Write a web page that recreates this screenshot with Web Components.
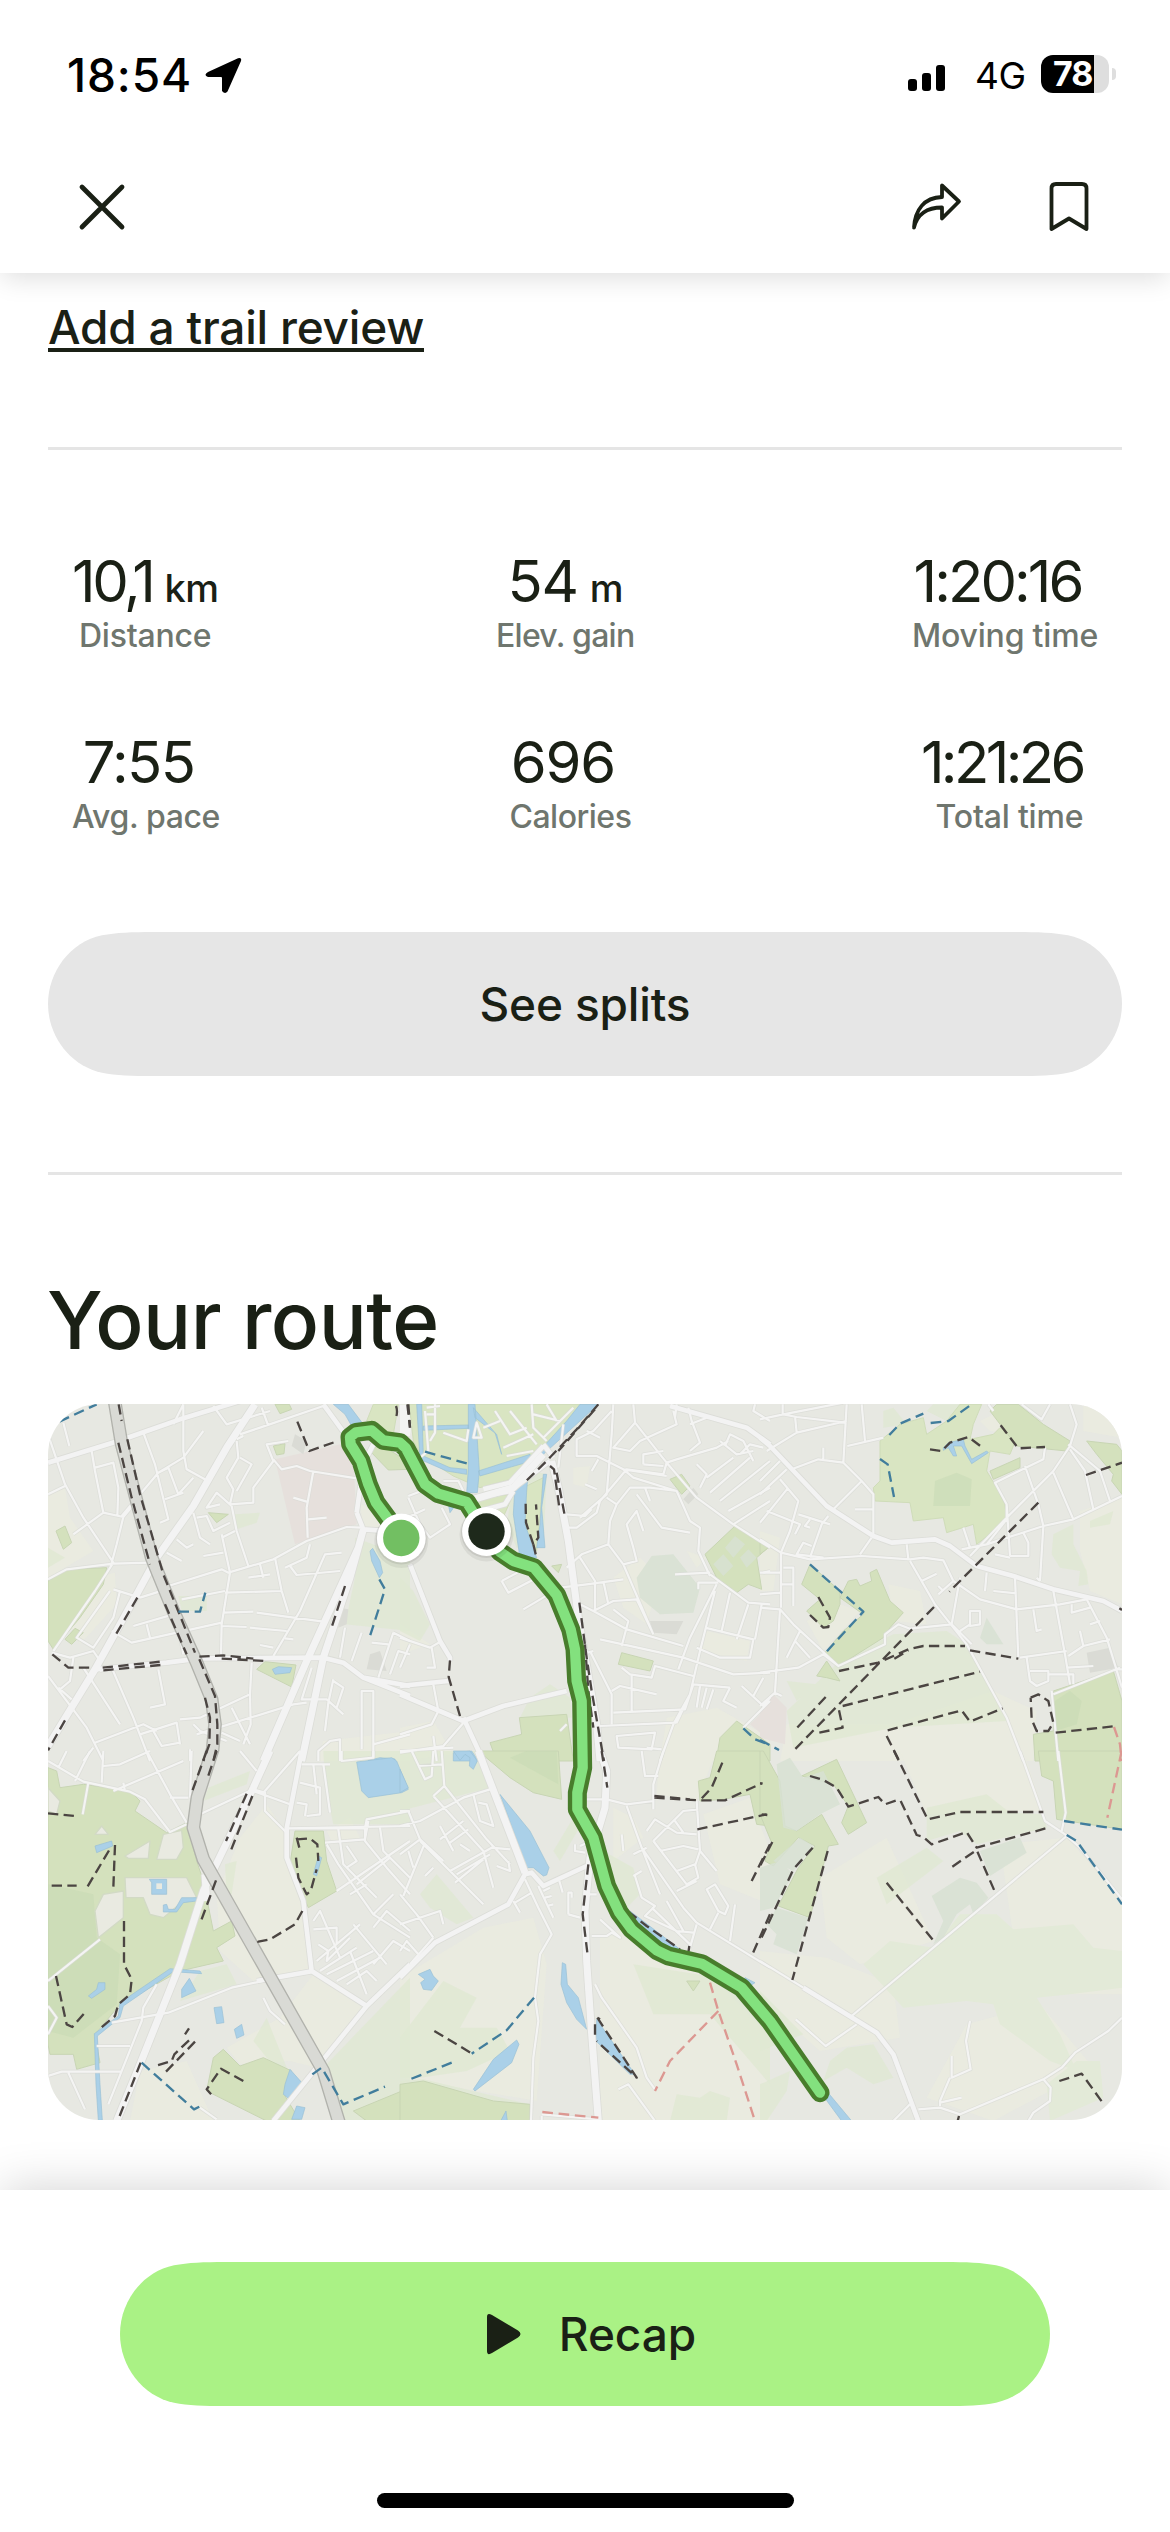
<!DOCTYPE html>
<html lang="en">
<head>
<meta charset="utf-8">
<title>Activity</title>
<style>
  html, body { margin: 0; padding: 0; background: #fff; }
  body { width: 1170px; height: 2532px; overflow: hidden; font-family: Inter, "Liberation Sans", sans-serif; color: #1a2015; }
</style>
</head>
<body>
<activity-screen></activity-screen>
<script>
const define = (name, html, setup) => customElements.define(name, class extends HTMLElement {
  constructor() {
    super();
    this.attachShadow({ mode: 'open' }).innerHTML = html;
  }
  connectedCallback() { if (setup) setup(this, this.shadowRoot); }
});

define('status-bar', `
<style>
  :host { display: flex; height: 147px; box-sizing: border-box; padding: 0 54px 0 67px; align-items: flex-start; color: #000; }
  .time { font-size: 46px; font-weight: 550; line-height: 54px; margin-top: 48px; width: 125px; letter-spacing: .9px; white-space: nowrap; }
  .arrow { margin: 57px 0 0 13px; }
  .right { margin-left: auto; display: flex; align-items: flex-start; }
  .bars { display: flex; align-items: flex-end; gap: 5px; margin-top: 65px; height: 26px; }
  .bars i { width: 9px; border-radius: 3px; background: #000; }
  .net { font-size: 37px; line-height: 44px; margin: 54px 0 0 30px; width: 66px; letter-spacing: -.5px; }
  .bat { margin-top: 55px; width: 68px; height: 38px; border-radius: 12px; background: linear-gradient(90deg, #000 53px, #dedede 53px); color: #fff; font-weight: 700; font-size: 34px; line-height: 38px; text-indent: 12px; letter-spacing: -1px; }
  .nub { width: 4px; height: 12px; border-radius: 0 5px 5px 0; background: #dedede; margin: 68px 0 0 3px; }
</style>
<div class="time">18:54</div>
<svg class="arrow" width="37" height="37" viewBox="0 0 37 37"><path d="M3 15 L33 1.3 Q37 0 36 4 L22.500 34.500 Q20 37.500 17 34 V21 Q17 20 16 20 H3 Q-2 18 3 15Z"/></svg>
<div class="right">
  <div class="bars"><i style="height:12px"></i><i style="height:18px"></i><i style="height:26px"></i></div>
  <div class="net">4G</div><div class="bat">78</div><div class="nub"></div>
</div>`);

define('nav-bar', `
<style>
  :host { display: flex; height: 126px; box-sizing: border-box; align-items: flex-start; padding: 32px 78px 0 76px; }
  svg { fill: none; stroke: #1a2015; stroke-width: 3.800; stroke-linecap: round; stroke-linejoin: round; display: block; }
  .gap { flex: 1; } .share { margin-right: 85px; }
</style>
<svg width="52" height="56" viewBox="0 0 52 56"><path style="stroke-width:4.800" d="M6 8 46 48M46 8 6 48"/></svg>
<div class="gap"></div>
<svg class="share" width="54" height="56" viewBox="0 0 54 56"><path d="M33 6.500V18C15 18.500 6 31 5 48.500C8 35.500 18 28.500 33 28.500V39.500L50 22.500Z"/></svg>
<svg width="44" height="56" viewBox="0 0 44 56"><path d="M3.500 50V9.500Q3.500 5 8 5H34Q38.500 5 38.500 9.500V50L21 39.500Z"/></svg>`);

define('page-header', `
<style>:host { display: block; height: 273px; background: #fff; position: relative; z-index: 2; box-shadow: 0 6px 26px -2px rgba(0,0,0,.14); }</style>
<status-bar></status-bar><nav-bar></nav-bar>`);

define('stat-item', `
<style>
  :host { display: flex; flex-direction: column; align-items: center; }
  .v { font-size: 58px; line-height: 70px; height: 70px; letter-spacing: var(--track, -1.200px); white-space: nowrap; margin-top: -3px; }
  .u { font-size: 38px; font-weight: 500; letter-spacing: -.5px; margin-left: var(--gap, 15px); }
  .l { font-size: 32px; line-height: 40px; color: #6f766e; font-weight: 500; letter-spacing: var(--lt, -.2px); white-space: nowrap; }
</style>
<div class="v"><slot></slot><span class="u"></span></div><div class="l"></div>`,
(el, r) => { r.querySelector('.u').textContent = el.getAttribute('unit') || ''; r.querySelector('.l').textContent = el.getAttribute('label'); });

define('stat-row', `<style>:host { display: flex; justify-content: space-between; height: 181px; padding: 0 24px; }</style><slot></slot>`);

/* Capsule with continuous corners: the curve eases into the straight edge over 105px. */
define('pill-button', `
<style>
  :host { display: flex; align-items: center; justify-content: center; height: 144px; background: var(--bg, #e6e6e6); font-size: 46px; font-weight: 550; letter-spacing: var(--bt, -.15px); }
</style><slot></slot>`,
el => {
  const w = +el.getAttribute('width');
  el.style.width = w + 'px';
  el.style.clipPath = `path("M0,72 C0,40 22,10 54,3.300 C68,.6 84,0 105,0 H${w - 105} C${w - 84},0 ${w - 68},.6 ${w - 54},3.300 C${w - 22},10 ${w},40 ${w},72 C${w},104 ${w - 22},134 ${w - 54},140.700 C${w - 68},143.400 ${w - 84},144 ${w - 105},144 H105 C84,144 68,143.400 54,140.700 C22,134 0,104 0,72Z")`;
});

define('rule-line', `<style>:host { display: block; height: 3px; background: #e5e5e5; }</style>`);

/* Street map. Each tile uses its own 1080-unit grid, three units to a pixel. */
const TILES = [
{ x: 0, y: 0,
  pale: 'M24,300 75,290 90,380 160,480 24,560ZM160,560 225,545 230,640 120,760 90,700ZM850,1050 1110,1020V1110H830ZM960,340 1030,360 1040,420 970,410Z',
  park: 'M945,440 1110,500V720L915,700 945,560ZM24,470 75,500 24,530ZM585,370 660,365 650,395 590,415ZM415,615H500V660H425Z',
  green: 'M24,570 80,535 200,530 190,580 120,680 40,775 24,750ZM705,40H748L755,55 720,68ZM700,165 735,158 732,188 710,192ZM505,365 565,370 530,395ZM650,835 675,812 768,822 755,888ZM75,745 105,712 130,725 95,760ZM990,180 1020,160 1085,200 1110,235 1045,237ZM48,420 75,405 95,455 70,475Z',
  lime: 'M1000,40H1075L1060,130 980,90Z',
  pink: 'M705,205 900,160 940,200 950,400 765,460Z', grey: 'M765,130 800,150 790,190 755,165ZM900,650 925,655 920,700 895,710ZM990,790 1020,780 1040,840 980,835Z',
  water: 'M880,40H925L970,100 935,105 915,70ZM990,480 998,472 1020,510 1028,545 1018,560 995,510ZM697,835 715,827 755,830 750,845 705,850ZM985,1108 1020,1100 1065,1104V1110Z',
  minor: 'M24,130 75,280 130,380 220,515 165,600 40,780M24,310 75,285M70,95 88,165M155,180 165,240 190,365 250,378 230,460 215,515M165,230 220,215 235,290 232,375M190,365 100,430M24,565 80,535 220,518 330,515M245,375 355,245 430,200 490,120M250,378 290,330M310,125 345,220 385,385 360,395M430,40V180L440,235 500,268M355,245 385,230 415,310 460,260M375,325 430,305M430,40 400,100M520,45 560,100 690,60M600,130 660,110 850,45M610,135 590,145M590,150 595,200 560,260 580,295 570,340 640,335 640,290 700,210 680,160 745,150M600,200 635,220 590,300M665,50 685,105M700,205 725,235 770,225 810,240 950,262M820,240 800,350 803,440M760,320 800,332M805,385 860,380M575,345 590,420 625,525M575,345 530,305 500,350 540,340M385,585 545,535 565,545 700,505 800,450 920,408 965,410M545,430 570,545 545,700 543,790M555,605 725,600 745,665M550,665 640,662M650,665 850,692M545,705 620,708M630,710 740,720M705,500 725,600M750,525 770,552 900,540M735,530 800,500 810,460M905,485 855,490 780,660 700,795M460,365 480,440 510,460M470,380 500,375 520,420 570,395M380,485 425,510M410,445 440,470 460,460M490,495 550,485M545,440 585,420M395,590 300,620M220,595 300,620M210,600 110,740 160,770 220,680 240,600M35,785 90,800 160,780 180,810M215,720 275,755 545,695M280,705 400,670M320,700 330,740M425,625 555,600M405,660 430,790M24,855 140,1010 190,1110M95,925 55,890M180,840 215,830 280,980 330,1110M60,895 90,870 100,800M130,830 240,1000M165,1055 310,1000 350,1020M355,835 375,940 330,950M300,1030 410,995 420,1060M340,1020 365,1065 420,1055M420,985 480,980 630,910M635,815 630,910 632,1000 610,1060M575,950 630,1060M470,1030 760,940 800,935M545,1025 600,1050M460,1000 480,1020 560,1050M660,762 700,770M735,742 760,745M915,710 900,800M965,725 935,810M995,755 1045,760M1060,725 1015,860M1060,725 1110,750M1050,850 1075,780 1110,790M815,830 785,925 860,925 910,970M880,865 865,935 855,1020M880,870 910,890 890,950M965,1075V900H1000V1100M835,1110V1080L870,1050 900,1045V1110M1000,1060 1110,1030M625,560 690,550M660,520 670,560M130,1110 160,1070M450,1075V1110',
  major: 'M24,215 235,150 420,85 600,30M380,815 480,802 850,800 910,815 970,860 1110,915M970,860 1110,885M165,835 380,815M850,40 930,150M950,365 970,415 1040,420M965,260 950,365M980,200 1000,160',
  big: 'M645,40 560,170 460,345 350,500 290,610 165,835 24,1065M970,415 955,470 800,810 670,1110M955,470 930,560 850,800 785,1110',
  black: 'M236,40 245,90M262,145 300,310 370,550 465,785M235,155 275,320 330,520M375,640 440,790M478,805 525,915 532,1000V1060L520,1110M495,920 510,980 508,1060 490,1110M772,92 808,180 885,153M292,620 225,735M37,790 85,830H155M188,830 362,812M190,838 362,822M478,797 550,793 640,803M545,803 680,810M915,585 873,715M75,988 24,1078M1068,45Q1074,60 1068,80M1105,40 1110,110',
  blue: 'M58,92 170,40M415,662H480L496,605M1018,565 1035,595 990,735' },
{ x: 1080, y: 0,
  pale: 'M520,230 570,225 560,290 520,280ZM920,720 1050,750 1040,810 900,780ZM800,980 950,950 1110,1040V1110H780ZM640,560 720,500 780,560 740,700 670,650ZM0,700 90,760 0,790ZM0,1010 100,990 160,1090 0,1110ZM860,480 920,500 890,530Z',
  park: 'M0,560 40,600 90,700 60,750 0,720ZM390,920 450,880 510,920 515,980 360,980ZM340,280 400,240 440,250 430,470 350,470 320,400Z',
  lime: 'M0,40H590L520,90 350,260 240,290 160,255 65,195 40,150 30,60ZM350,300 430,260 410,480 370,400ZM205,320 340,310 300,400 230,350Z',
  road: 'M0,40H22L34,100 30,135H0Z',
  green: 'M810,265 845,250 870,285 845,310ZM915,490 1005,405 1110,465 1070,500 1085,595 1045,580 1010,605 950,560ZM665,785 760,810 750,840 655,820ZM270,1055 365,1030 358,980 500,970 520,1110H290ZM950,1100 960,1040 1010,990 1110,1060V1110ZM455,525 485,520 475,545Z',
  park2: 'M710,560 755,495 820,490 900,590 880,665 780,670 720,620ZM975,470 1005,435 1035,460 1000,500ZM940,520 970,490 1000,525 970,555ZM1020,500 1045,475 1070,500 1040,530Z',
  pink: 'M1050,1000 1110,940V1050Z', grey: 'M850,325 880,290 895,310 865,340ZM750,690 850,690 830,730 760,725Z',
  water: 'M205,40H225L238,240 232,305H200L205,235ZM50,40H65L70,195 150,230 200,235V250L140,240 60,205ZM70,105 205,102V112L70,118ZM220,50 285,125 305,190 290,130 225,80ZM235,240 390,190 395,210 240,255ZM540,40H595L430,190 385,240 380,300 375,400 410,500 360,500 340,370 345,280 400,200 500,90ZM440,250 425,350 435,470 410,470 420,400 430,250ZM145,340 165,345 150,365ZM160,1085 215,1080 235,1110H160Z',
  minor: 'M75,60 85,180 60,200M105,40V125L90,150M80,50 120,45M130,125 200,150 205,115M80,70H105M230,95 220,140 245,140ZM250,110 300,90M285,60 330,130 380,110M330,60 410,160M395,40 400,110 440,150M400,70 480,90M440,40 470,90M310,170 400,130M320,195 400,180M520,50 430,140M130,270 175,270 190,300M25,315 90,290M25,320 60,400 90,440 150,400 125,350M20,380 75,355M475,230 490,100M640,40 635,130 620,310 540,380M635,60 580,120 530,145V195H590L670,235 800,255M575,240 595,205M700,40 705,95 780,190 800,215 890,320 1000,400 1110,470M705,95 640,170 690,180 720,150 830,100 820,60M560,120 600,140M800,215 790,250 680,235 600,330 590,365 530,410 500,410M670,235 700,260 830,300 870,390 900,410 895,480 930,555M830,300 750,290 690,290 650,340 630,390 625,460 670,520 760,730M620,320 650,340M625,460 545,490 500,530M670,520 710,510 700,470 680,400 710,360 730,420M710,310 785,410 870,425M735,290 750,330M500,370 555,375 575,355M730,220V190L790,180M730,220 790,225M555,280 590,295M865,50 875,90 900,155 870,180M870,100 920,80M830,40 825,80M1110,90 1060,60 1065,40M800,215 830,205 950,170 985,150M900,290 920,250 890,220M920,260 1000,200M930,305 1050,200M960,330 1110,210M985,360 1110,290M1000,400 1110,330M960,150 1010,190 1060,180M975,165 990,130 1030,150 1060,210M1020,190 1050,160 1090,170M1090,545 1110,540M825,550 930,545M895,595V575H955M930,550 1045,635 1110,640M950,580 870,740 835,835M945,600 900,780 870,910 820,1000 780,1110M990,605 965,720M1045,640 1010,745M915,710 1060,745 1050,800 960,800 890,770M1085,640 1065,745M600,745 850,800 1000,850 1110,845M540,640 580,660 680,715 850,765M585,655V570L540,500M580,660 640,630 710,625 760,730M610,570 625,640M480,590 560,580 670,565M665,765 685,690 640,655M305,570 380,530M305,570 325,605 440,545M370,655 480,590M570,780 635,910V1000M580,780 545,790M635,900 660,885 770,910M665,830 690,850 755,860 765,825 880,855M695,850V965M640,965 855,955 880,880M600,1005 830,995M650,1035 765,1025 755,1075 655,1070ZM785,1075 740,1070M880,880 990,890M900,885 890,950M920,890 905,950M940,895 920,955M990,890 970,930 1010,950M1025,885 1090,945 1110,920M1060,915 1090,860M870,910 830,995M1030,1010 1110,930M0,740 90,770 125,750M30,760 0,830M95,770 105,830 80,830M0,1030 95,1000 115,960 100,880M195,990 130,1065 0,1085M100,1035 110,1110M0,1080 160,1070M500,1000 480,1020',
  major: 'M30,520 120,750 150,800 150,810M0,885 145,870M0,910 190,990 310,945 500,900M190,980 250,1110M225,320 330,300 450,210M250,295 330,275 430,165M340,300 315,340 240,360M810,45 1040,110 1110,160M430,160 460,200',
  big: 'M455,210 475,290 505,450 535,680 590,1000 600,1110M430,190 340,290 220,325',
  black: 'M22,40 30,110M595,40 530,115 440,210 370,278M585,55 475,180M450,225 462,235 478,350M470,245 495,378M377,338 378,395 400,460 415,440 408,340M400,460 412,510M538,635 560,800 575,900 612,1110M555,760 565,900 580,1010M150,808 146,858 180,975',
  blue: 'M75,182 203,218M1030,1012 1065,1045 1110,1062' },
{ x: 2160, y: 0,
  pale: 'M240,640 300,660 190,780 140,690ZM385,580 480,600 500,700 400,690ZM960,360 1086,320V640L990,600 960,480ZM660,90 720,60 760,130 690,120ZM0,420 60,440 40,600 0,600ZM80,1000 400,1000 700,900 830,960 820,1110H60ZM970,40H1086V140L970,120Z',
  park: 'M500,60 520,40H640L560,90ZM370,60 400,50 440,100 370,110ZM80,960 250,800 400,730 560,720 620,760 740,990 400,1010 100,1070ZM880,430 940,400 940,460 980,540 985,580 955,585 960,540 900,530 875,490ZM990,390 1060,360 1050,400 990,410ZM80,870 170,880 110,930Z',
  lime: 'M360,150 420,100 490,80 500,130 560,90 600,40H665L640,100 630,145 700,130 720,110 770,140 750,190 690,180 680,240 710,290 735,340 740,390 650,460 640,400 560,425 550,380 460,390 450,335 345,330 340,290 360,270Z',
  green: 'M710,40H775L850,100 930,150 920,180 770,165 690,60ZM690,240 780,200 780,230 700,265ZM980,150 1070,160 1086,180V310L1055,270 1060,250 1010,190ZM125,580 150,520 240,600 240,640 220,690 190,710 140,660 180,625ZM240,620 265,570 290,565 300,585 335,570 330,545 350,535 390,630 430,665 390,710 370,740 235,825 190,790 250,720 310,670ZM170,855 200,810 240,870 200,860ZM0,455 25,470 0,490ZM880,900 1060,840 1086,930V1110H825L820,1030 880,1020Z',
  park2: 'M680,760 660,740 680,680 730,760Z',
  green2: 'M525,270 590,245 635,265 630,345H520ZM885,930 930,900 965,930 950,1000 885,1020Z',
  pink: 'M0,960 40,910 80,950 75,1060 0,1040Z', grey: 'M980,785 1050,770 1075,830 990,845Z',
  water: 'M550,170 565,155 610,145 615,165 635,205 680,180 685,185 635,218 605,165 580,165 590,195 580,195 565,170 550,178Z',
  minor: 'M0,85 70,70 250,35M70,70 110,78 255,95M105,75 110,125M68,40V70M260,40 250,215M305,40 315,150M262,165 370,140M110,125 260,90M20,180 110,125M95,235 175,205 250,215 305,270 340,310V435M305,270 220,355M190,205V170M0,270 60,210M0,310 80,235M60,265 115,330 90,420 63,485M0,395 85,290M20,360 120,400 105,430M115,370 210,400M285,355H340M205,375 185,400 150,500M150,385 135,405 150,410M190,500 110,490 130,455 155,465M335,440 300,490M0,445 63,485 150,505 305,495 450,505 490,500 550,508 580,570M63,485V650M0,545 60,545M60,580H100V530H70M0,610 60,605M100,580V645M0,650 60,655 100,700 235,825M60,655 45,905 0,945M45,905 65,915M120,720 80,800M105,750 150,800M0,845 115,830 190,790 235,825 375,760V730L415,700 450,713 575,700M440,460 445,505M450,510 525,640 620,760 740,980 790,1110M580,570 660,625 770,655 900,640 980,625M600,560 575,700 635,760M485,570 530,548M535,585 550,600M535,610 580,570M630,660V705L660,700V660ZM600,720 630,700M610,410 630,470M605,475 680,460 850,405 940,385 1086,315M680,460 740,385V340L705,275 850,205 855,170M740,340 750,495M705,490 750,500M750,495H805V455L790,425M630,495 740,380 880,240 930,165 950,100 930,40M795,225 835,340 850,405 840,570M880,245 940,385M930,175 975,240 1000,355M925,160 1020,240 1050,330M785,40 845,85 870,40M685,40 700,60M680,545 675,600M700,600 770,607M765,560 775,800M830,560 840,570M880,600 915,790 930,880M980,625 1040,740 1086,890M935,640V665L990,650M990,700 1020,690M820,655 830,720 845,715M960,720 970,765 925,795M780,800 920,780M970,765 1050,745M800,800 810,870 830,885 865,870V840L810,840M865,850 940,850V880M920,830 1000,825M1075,835 1086,835M880,910 1080,830M875,900 895,1110',
  major: 'M0,140 30,165 200,345 340,435 395,455 525,445 570,465 650,525 760,555 880,595 1030,630 1086,660',
  black: 'M722,103 775,172 855,168M510,175 545,180 570,155 625,138 668,170M978,252 1086,215M835,335 568,602M522,648 100,1080M175,618 210,680 205,708 190,710 150,672M237,840 355,815 445,775 490,765H615M403,803 445,778M630,778 775,803M248,945 660,842M197,918 107,1015M178,1025 248,1010 235,948M383,1018 605,958 630,992 728,952M380,1035 418,1110M812,920 835,910 865,930 880,995 865,1020 830,1020 815,985 812,920M887,1025 1060,1006M1078,652 1086,657',
  blue: 'M388,132 420,98 490,68M512,96 565,90 632,42M360,204 383,220 402,318M150,520 200,565 310,662 195,787M0,1047 57,1077',
  red: 'M1062,1008 1080,1060 1085,1110' },
{ x: 0, y: 1080,
  pale: 'M680,160 740,250 745,340 795,470 820,650 640,690 540,600 530,430 600,260ZM560,890 720,800 820,670 980,760 830,950 750,930 600,940ZM860,240 930,200 960,260 880,280ZM300,960 440,930 520,1110H270Z',
  park: 'M850,0H1110V220H880L855,100ZM480,660 560,640 590,700 420,750ZM850,950 1110,680V1110H900ZM640,870 680,800 760,1000 680,920ZM505,110 630,60 620,100 490,150ZM555,340 590,330 575,430 560,430Z',
  green: 'M24,50 50,60 60,110 130,100 270,120 300,150 285,180 380,245 440,215 470,330 490,390 520,540 575,510 585,555 530,590 550,630 420,660 240,760 165,850 180,935 110,955 100,910 30,910 24,880ZM765,240H850L860,330 890,420 805,470 750,340ZM520,920 550,895 600,945 670,920 755,960 735,1035 780,1110H680L500,1020ZM940,1080 1110,1010V1110H980Z',
  green2: 'M24,400 160,430 170,560 240,610 230,760 100,860 24,840Z',
  pale2: 'M255,315 330,270 325,322 265,322ZM370,250 425,238 430,290 410,325H350ZM255,380H440L470,440 430,450 370,500 330,490 310,440 258,440ZM190,430 250,420V500L175,560 165,480ZM185,225 205,250H165ZM24,110 60,150 50,190 24,180Z',
  water: 'M950,33 1055,20 1070,30 1105,115 1085,125 985,140 965,120ZM165,285 215,270 218,285 170,305ZM328,385H380V430H335V395ZM370,462 380,460 385,475 405,475 425,440H470V450L430,455 410,483H370ZM145,735 170,715 175,695 195,695V715L155,742ZM425,740V715L448,682 468,720ZM522,770 545,767 552,815 530,818ZM583,835 605,820 612,852 590,862ZM835,315 845,320 830,375 820,370ZM735,1000 750,955 790,1000 745,1042 730,1030ZM755,1105 770,1065 795,1070 785,1105ZM163,848 235,795 240,755 390,653 480,660 485,668 400,662 250,765 240,800 172,855 180,1000 187,1108H175L168,1000Z',
  hole: 'M349,397H366V414H349Z',
  minor: 'M24,30 130,92 270,122 315,145 390,243 440,220M145,95 128,190M185,95 190,0M105,90 150,0M55,50 80,0M190,45 240,40 330,0M220,120 430,30M320,0 390,130 440,215M455,0 450,140M390,140H445M250,95 255,120M480,190 640,115M640,115 675,125V180L740,245M640,120 750,160M780,0 670,125M600,0 650,60M740,232H975L980,205 1110,180M740,232 1110,225M785,40H870M820,40 830,130M850,40 870,185M780,95 840,110V190L800,195M770,155 800,160 795,195M905,0V30L1000,20V0M855,275 975,265 985,210M860,280 895,340 1000,490 1110,560M895,235 910,340 1010,440M975,230V270L1040,350 1110,430M1020,230 1030,300 1110,380M890,420 1110,270M950,400 1050,320M920,285 950,330 920,350M1000,490 1060,430M930,430 980,400M820,510 840,480 900,620M820,535 890,530V580M835,580 865,600 860,630 930,560M830,630 960,520M840,660 950,590M860,670 1000,600M890,690 1020,620M920,700 980,660 1010,690M940,520 1040,640M1000,530 1040,480 1110,540M1000,640 1060,570 1110,600M930,600 980,730M24,690 180,565M24,850 50,800 24,765M24,975 65,962H245M85,965 135,1075M170,885H270M215,815 385,785 575,710 810,660M350,700 310,770 305,810 205,1060M480,1070 530,1105M670,740 690,780 735,820',
  major: 'M690,0 640,115M785,0 740,232 740,320 790,450 815,660 980,765 1110,640M980,765 700,1110M650,690 820,660',
  big: 'M690,0 640,110 490,420 420,640 300,940 230,1110M495,370 500,450',
  black: 'M24,187 105,195M35,404H110M143,406 215,285M225,282 220,410M252,510V640L275,685 270,730 235,760 225,795 183,830M48,675 80,820 97,828 132,788M500,0 455,125M530,0 503,80M620,128 558,270M637,135 572,300M528,388 483,510M770,265 810,262 832,280 835,330M770,260 778,290M768,320 775,380 800,430 812,420 830,355M787,480 765,520 690,565 655,572V585M447,832 435,850M447,868 403,910 395,930 345,945M465,872 375,965M610,990 543,953 500,1015 515,1032M302,935 235,1105',
  blue: 'M305,935 462,1075 482,1065M817,970 845,950 910,1060 1035,1007' },
{ x: 1080, y: 1080,
  pale: 'M0,680 250,530 400,500 440,640 410,1050 0,980ZM600,560 700,520 760,600 960,700 1110,860V1110H600ZM910,190 1050,140 1110,300V460L960,400ZM640,170 700,200 730,260 640,330ZM780,0H950L890,150 770,130Z',
  park: 'M0,0H240L270,110 0,180ZM0,860 130,690 230,740 180,830 290,830 330,900 200,960 60,980 0,980ZM0,990 70,985 390,1060V1110H0ZM460,300 520,200 550,210 480,330ZM610,300 700,350 720,430 670,480ZM810,1110 830,1030 900,1040 930,1020 990,1040 980,1110ZM60,430 110,370 220,500 170,520 90,470ZM700,640 960,680 1110,850V1000L930,790H760Z',
  green: 'M235,0H475L485,145 400,125 330,80ZM930,80 950,0H1080L1110,40V225L1070,220 1050,130 970,145 900,150 895,90ZM0,1000 70,990 280,1050 390,1060V1110H0ZM860,690 880,720 900,690Z',
  green2: 'M330,20 380,0H470L475,100Z',
  water: 'M300,130 390,240 447,350 440,372 430,375 400,350 380,350ZM0,55 25,110 0,125ZM487,635 497,640 502,700 535,740 560,835 530,805 500,755 483,700ZM590,805 705,970 690,970 588,870ZM690,480 840,595 800,600 740,550ZM1035,680 1065,695 1050,705 1030,690ZM55,670 90,655 100,675 115,690 95,718 70,715 62,695 75,685ZM220,1015 280,925 350,867 357,880 335,935 225,1020ZM302,1110 318,1080 322,1110ZM160,0H210L232,30 220,55 208,45 210,20 195,10 180,28Z',
  minor: 'M35,0 75,85 95,75 100,0M55,45 125,40M125,0 133,105 260,265 330,340M100,135 133,105M100,135 250,300 280,410M0,225 60,210 190,140 270,115M0,180 25,180 60,265 130,330M60,265 0,310M60,270 150,360 250,460M75,275 10,435M25,300 40,350M0,430 50,490 100,560M0,520 120,480 130,520M0,600 20,570 55,610M120,225 160,300M150,275 205,235M150,360 275,290 330,295M165,395 250,325M170,370 270,310M120,265 190,210M180,280 210,300M220,130 240,210 280,225 260,160 235,155M290,345 330,360 325,330M75,375 100,350M100,560 30,640M340,450 360,485M375,385 415,470 455,550 420,610 405,740 415,810 400,920 393,1110M345,455 395,425M415,405 460,500M430,420 450,410M435,440 455,435M440,465 460,460M478,390 488,425M505,490V425H515V440M505,490 540,500M560,145H620L680,160 760,150M570,430H590M680,165 725,290 780,430M725,290 850,470 890,515 1110,650M760,175V100L790,0M725,0 735,75H775M740,240 765,205 830,245 890,250M760,270 850,180 895,175M760,270 860,400 895,380 885,340 830,360M890,150 900,300 885,345M900,300 950,360M780,300 850,285 895,295M825,210 850,245M700,310 740,290M665,250 670,300M705,375 725,440 765,465 735,495 830,540 880,545M700,375 725,360M800,450 850,540M830,420 890,390M920,415 945,400 985,465 975,490 955,480ZM955,485 930,535M1005,460 990,570M890,520 870,590M600,505 660,560 635,545 620,555H575M585,700 605,740 710,890 740,980 765,1015M655,1015 685,1000 765,1110M525,280V300L555,305M575,270 540,285M755,470 870,580M425,1095V1110M425,1090 595,1105',
  major: 'M0,680 105,575 325,460 375,370 395,365 430,405 560,345',
  big: 'M235,0 375,365M600,0 620,60 615,170 570,320 555,480 560,630 575,850 595,1110',
  black: 'M605,0 622,110M565,340 548,490 562,605M763,140 895,148H975L1085,97M763,135 870,145M967,35 935,110 900,148M892,235 1100,190M1110,280 1055,390M1110,490 1058,608M685,482 740,525 840,595M868,585 865,605M592,800 710,980 590,870M585,820V855M592,800 600,805M103,840 215,907',
  blue: 'M402,740 320,838 215,908M155,935 30,985',
  red: 'M930,695 955,780 1010,940 1065,1110M955,780 810,930 765,1020M427,1083 595,1100' },
{ x: 2160, y: 1080,
  pale: 'M420,0H790L850,180 500,190ZM180,380 380,260 520,570 300,640 200,560ZM0,600 200,620 400,700 420,860 180,900 0,740ZM720,280 920,260 1086,440V730L940,730 760,560ZM620,820 840,760 1000,950 700,1110 500,1040ZM910,0H1086V210H910Z',
  park: 'M500,170 680,130 750,185 850,190 860,230 650,280 600,240 500,270ZM350,380 500,290 550,330 380,460ZM210,930 260,890 340,880 400,980 340,1000 260,950 190,990ZM0,1000 90,960 80,1020 20,1110H0ZM0,720 130,850 0,900Z',
  mint: 'M390,570 520,590 600,490 710,490 760,535 940,520 1000,590 1086,600V710L930,730 830,740 900,850 950,960 870,930 720,820 700,760 620,750 430,770 310,640ZM860,1000 950,930H1020L1030,1040 870,1110Z',
  park2: 'M50,40 90,20 130,80 190,60 240,160 180,190 110,240 70,230ZM515,435 600,380 650,395 685,440 640,490 630,460 590,490 550,560 520,580 550,510ZM660,300 780,260 800,305 690,375ZM0,350 60,330 100,370 40,470 0,480ZM50,470 145,500 110,610 40,580 50,550 20,520ZM40,330 120,260 160,285 100,360Z',
  green: 'M0,0H10L60,90 75,225 110,240 185,190 235,280 205,285 150,500 55,465 115,350 165,285 115,260 40,345 15,330 35,275 0,190ZM125,75 230,25 320,215 265,250 245,215 265,165 220,100ZM835,0H1086V235L890,205 880,90 845,75Z',
  water: 'M200,1020 275,1110H245L190,1035Z',
  minor: 'M780,0 855,210 915,250M895,0 917,185 905,240M920,255 275,795M915,250 960,290 1086,445M107,805 197,885 290,820M630,810 618,870 632,955 575,980V915M570,980 540,1050V1065M540,1055 605,1040M475,1075 540,1070 600,1090 850,985 905,950 945,905 1045,840 1086,800M850,985 872,1010 870,1050 820,1085 805,1110M450,1060 400,1110M0,630 130,710',
  major: 'M130,710 350,845 400,910 475,1110',
  black: 'M402,0 503,205 600,183H850M150,75 190,87 230,110 265,167 355,138 375,160 410,148M422,150 470,252 490,258 515,280 620,243 650,290 865,230M577,347 650,297 708,430M380,395 527,577M203,300 97,687M158,290 100,355 45,475 0,570M37,273 0,345M0,97H8M5,190 22,192M898,990 965,968 1028,1055M597,1095 593,1110',
  blue: 'M912,210 1086,236M920,252 950,270 1086,460', red: 'M1085,0 1042,200' },
];
const LAYERS = [
  ['pale', 'fill="#eaebdf" opacity=".85"'], ['park', 'fill="#dfe8d2" opacity=".75"'], ['mint', 'fill="#e3ead8"'],
  ['pink', 'fill="#e6e0dc"'], ['grey', 'fill="#dadbd5"'],
  ['lime', 'fill="#d9e5c2" stroke="#cfdcb9" stroke-width="3"'], ['road', 'fill="#f3f3f3"'],
  ['green', 'fill="#d4e1bd" stroke="#c8d5b4" stroke-width="3"'], ['green2', 'fill="#c6d9b3" opacity=".5"'],
  ['park2', 'fill="#d7e1d2" opacity=".85"'], ['pale2', 'fill="#e9eae1" stroke="#d2dac5" stroke-width="4"'],
  ['water', 'fill="#aad0e8" stroke="#99bfd5" stroke-width="2"'], ['hole', 'fill="#e9eae1"'],
  ['minor', 'fill="none" stroke="#d9dad6" stroke-width="11" opacity=".7"'], ['major', 'fill="none" stroke="#dcddd8" stroke-width="19"'], ['big', 'fill="none" stroke="#dcddd8" stroke-width="26"'],
  ['minor', 'fill="none" stroke="#f4f4f3" stroke-width="6.600"'], ['major', 'fill="none" stroke="#f3f3f3" stroke-width="14"'], ['big', 'fill="none" stroke="#f3f3f3" stroke-width="21"'],
  'motorway',
  ['black', 'fill="none" stroke="#4b4542" stroke-width="7" stroke-dasharray="31 16"'],
  ['blue', 'fill="none" stroke="#417d9c" stroke-width="7" stroke-dasharray="32 17"'],
  ['red', 'fill="none" stroke="#dc9892" stroke-width="7" stroke-dasharray="32 17"'],
];
const MOTORWAY = 'M222,20 245,160 335,500 400,660 470,815 515,925 525,1000 518,1075 472,1220 460,1310 490,1405 850,2040 905,2220';
const ROUTE = 'M1084,441 1045,385 1008,335 985,280 963,210 932,160 930,138 948,124 995,118 1030,148 1080,155 1098,172 1155,280 1195,308 1280,333 1297,360 1340,432 1380,483 1420,510 1482,530 1550,612 1592,715 1605,775 1610,870 1625,930 1628,1130 1612,1205 1612,1255 1660,1340 1700,1485 1738,1565 1775,1615 1850,1678 1885,1695 1985,1718 2105,1790 2190,1890 2340,2105';
const joinL = d => d.replace(/M([\d.]+),([\d.]+) /g, 'M$1,$2 L');

define('route-map', `
<style>
  :host { display: block; width: 1074px; height: 716px; border-radius: 51px; overflow: hidden; background: #e7e8e2; }
  svg { display: block; }
</style>
<svg width="1074" height="716" viewBox="0 0 1074 716" aria-label="Route map"></svg>`,
(el, r) => {
  let s = '<g transform="translate(-8 -13) scale(.333333)" stroke-linejoin="round">';
  for (const layer of LAYERS) {
    if (layer === 'motorway') {
      const d = joinL(MOTORWAY);
      s += `<path d="${d}" fill="none" stroke="#b1b2ac" stroke-width="41"/><path d="${d}" fill="none" stroke="#d9dad5" stroke-width="33"/>`;
      continue;
    }
    for (const t of TILES) if (t[layer[0]]) s += `<path transform="translate(${t.x} ${t.y})" d="${joinL(t[layer[0]])}" ${layer[1]}/>`;
  }
  const route = joinL(ROUTE);
  s += `<path d="${route}" fill="none" stroke="#487d2c" stroke-width="57" stroke-linecap="round"/><path d="${route}" fill="none" stroke="#83e17e" stroke-width="31" stroke-linecap="round"/></g>`;
  const pin = (x, y, c) => `<circle cx="${x}" cy="${y + 3}" r="27" fill="#000" opacity=".06"/><circle cx="${x}" cy="${y + 1}" r="25.500" fill="#000" opacity=".08"/><circle cx="${x}" cy="${y}" r="24.400" fill="#fff"/><circle cx="${x}" cy="${y}" r="18.200" fill="${c}"/>`;
  s += pin(353.3, 134, '#72bf62') + pin(438.5, 127.5, '#1e291b');
  r.querySelector('svg').innerHTML = s;
});

define('bottom-bar', `
<style>
  :host { display: flex; flex-direction: column; align-items: center; height: 342px; box-sizing: border-box; padding-top: 72px; background: #fff; position: relative; z-index: 2; box-shadow: 0 -4px 44px -2px rgba(0,0,0,.17); }
  pill-button { --bg: #aaf285; --bt: -.1px; }
  svg { margin: 0 38px 0 13px; }
  .home { width: 417px; height: 15px; border-radius: 8px; background: #000; margin-top: 87px; }
</style>
<pill-button width="930"><svg width="34" height="42" viewBox="0 0 34 42"><path fill="#1a2015" d="M0 4Q0 -1 5 2L31 17.500Q36 21 31 24.500L5 40Q0 43 0 38Z"/></svg><span>Recap</span></pill-button>
<div class="home"></div>`);

define('activity-screen', `
<style>
  :host { display: flex; flex-direction: column; height: 2532px; }
  main { flex: 1; min-height: 0; padding: 0 48px; display: flex; flex-direction: column; }
  .link { align-self: flex-start; font-size: 46px; font-weight: 500; line-height: 56px; height: 49px; margin-top: 26px; border-bottom: 4px solid #1a2015; letter-spacing: -.22px; white-space: nowrap; }
  .r1 { margin-top: 95px; } .stats { margin-top: 99px; height: 383px; }
  .r2 { margin-top: 96px; }
  h2 { margin: 97px 0 0 -1px; font-size: 80px; line-height: 96px; height: 132px; font-weight: 550; letter-spacing: -.5px; }
  .a { --track: -3.400px; --gap: 12px; } .b { --lt: -.75px; --gap: 12px; } .c { --track: -2.950px; } .d { --track: -3.600px; }
  .p { --lt: -.4px; --track: -1.600px; } .q { --lt: -.5px; }
</style>
<page-header></page-header>
<main>
  <div class="link">Add a trail review</div>
  <rule-line class="r1"></rule-line>
  <div class="stats">
    <stat-row><stat-item class="a" unit="km" label="Distance">10,1</stat-item><stat-item class="b" unit="m" label="Elev. gain">54</stat-item><stat-item class="c" label="Moving time">1:20:16</stat-item></stat-row>
    <stat-row><stat-item class="p" label="Avg. pace">7:55</stat-item><stat-item class="q" label="Calories">696</stat-item><stat-item class="d" label="Total time">1:21:26</stat-item></stat-row>
  </div>
  <pill-button width="1074">See splits</pill-button>
  <rule-line class="r2"></rule-line>
  <h2>Your route</h2>
  <route-map></route-map>
</main>
<bottom-bar></bottom-bar>`);
</script>
</body>
</html>
